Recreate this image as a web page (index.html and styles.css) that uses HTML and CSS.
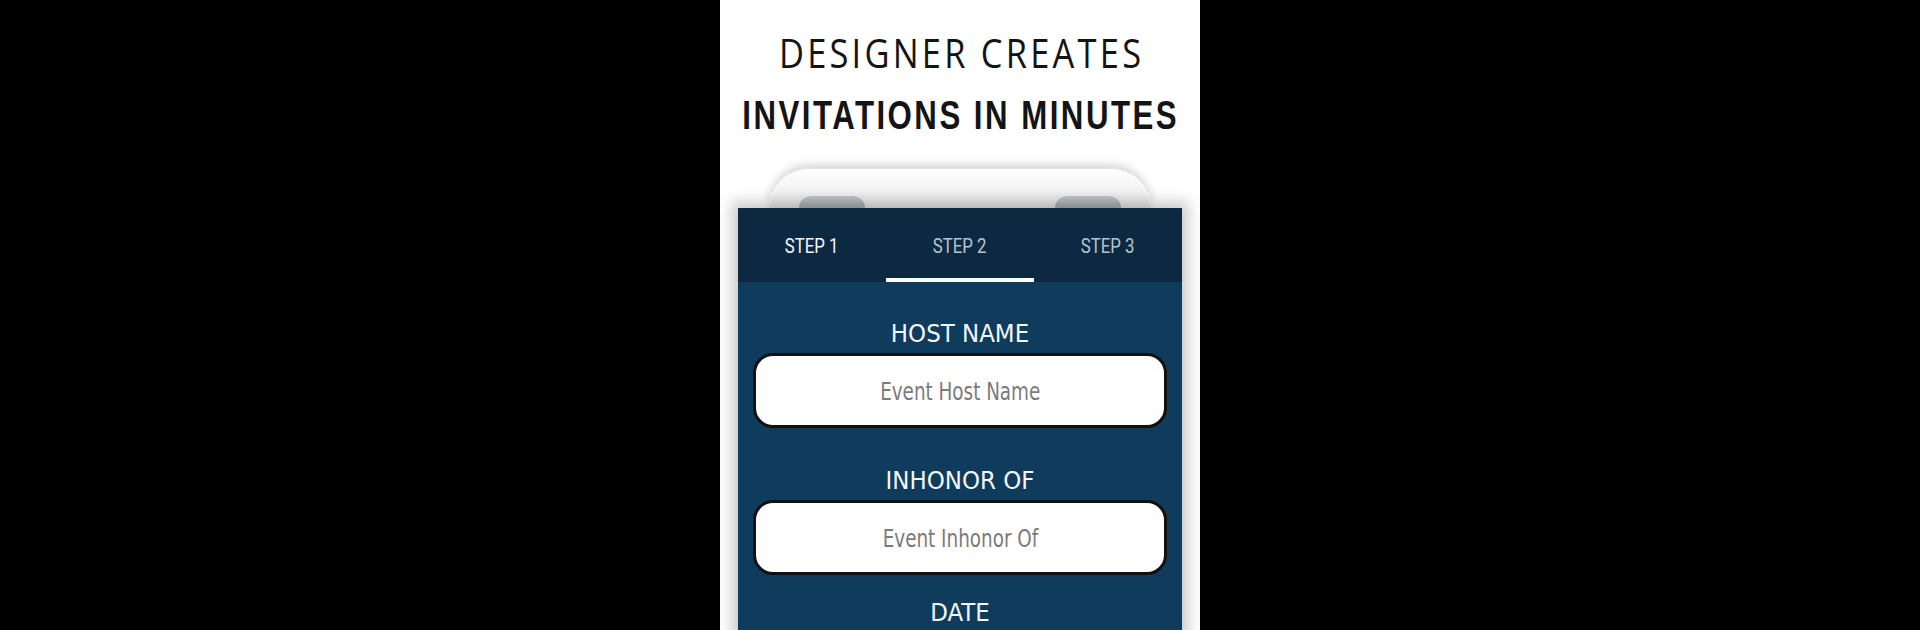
FILE: index.html
```html
<!DOCTYPE html>
<html lang="en">
<head>
<meta charset="utf-8">
<title>Invitation Maker</title>
<link rel="stylesheet" href="styles.css">
</head>
<body>
<main class="panel">
  <header class="title">
    <h1 class="title-light"><span>DESIGNER CREATES</span></h1>
    <h2 class="title-bold"><span>INVITATIONS IN MINUTES</span></h2>
  </header>
  <section class="device">
    <div class="phone-top">
      <span class="bump"></span>
      <span class="bump"></span>
    </div>
    <div class="card">
      <nav class="tabs">
        <div class="tab tab-done"><span>STEP 1</span></div>
        <div class="tab tab-active"><span>STEP 2</span></div>
        <div class="tab"><span>STEP 3</span></div>
      </nav>
      <div class="form">
        <div class="field field-first">
          <div class="label">HOST NAME</div>
          <div class="input"><span class="placeholder">Event Host Name</span></div>
        </div>
        <div class="field field-second">
          <div class="label">INHONOR OF</div>
          <div class="input"><span class="placeholder">Event Inhonor Of</span></div>
        </div>
        <div class="field">
          <div class="label">DATE</div>
        </div>
      </div>
    </div>
  </section>
</main>
</body>
</html>
```
FILE: styles.css
```css
html, body {
  margin: 0;
  padding: 0;
  background: #000;
  height: 630px;
  overflow: hidden;
}

.panel {
  width: 480px;
  height: 630px;
  margin: 0 auto;
  background: #fff;
  overflow: hidden;
  display: flex;
  flex-direction: column;
}

.title {
  padding-top: 28px;
  color: #141414;
}

.title-light,
.title-bold {
  display: flex;
  justify-content: center;
  white-space: nowrap;
}

.title-light span,
.title-bold span {
  display: block;
  flex-shrink: 0;
}

.title-light {
  margin: 0;
  font-family: "Open Sans", "DejaVu Sans", sans-serif;
  font-weight: 400;
  font-size: 40.5px;
  line-height: 50px;
  letter-spacing: 3.8px;
}

.title-light span {
  transform: scaleX(0.85);
  padding-left: 4px;
}

.title-bold {
  margin: 12px 0 0;
  font-family: "Liberation Sans", Arial, sans-serif;
  font-weight: 700;
  font-size: 40px;
  line-height: 50px;
  letter-spacing: 3.2px;
}

.title-bold span {
  transform: scaleX(0.78);
  padding-left: 3px;
}

.device {
  margin-top: 28px;
  display: flex;
  flex-direction: column;
  align-items: center;
}

.phone-top {
  width: 382px;
  height: 40px;
  box-sizing: border-box;
  border-radius: 52px 52px 0 0;
  background: linear-gradient(#ffffff, #f3f3f3 55%, #e4e4e4);
  border-top: 1px solid #e0e0e0;
  box-shadow: 0 -3px 10px rgba(0, 0, 0, 0.18), inset 0 2px 3px rgba(255,255,255,0.9);
  display: flex;
  align-items: flex-end;
  justify-content: space-between;
  padding: 0 30px 0 30px;
}

.bump {
  width: 66px;
  height: 12px;
  border-radius: 22px 22px 0 0;
  background: linear-gradient(#c2c6c6, #a6abab);
}

.card {
  width: 444px;
  flex: 1;
  min-height: 400px;
  background: #0f3b5c;
  box-shadow: 0 0 14px 6px rgba(0, 0, 0, 0.22);
}

.tabs {
  height: 74px;
  background: #0d2942;
  display: grid;
  grid-template-columns: repeat(3, 1fr);
}

.tab {
  display: flex;
  align-items: center;
  justify-content: center;
  box-sizing: border-box;
  font-family: Roboto, "Liberation Sans", sans-serif;
  font-size: 21px;
  color: #b9c3cd;
}

.tab span {
  display: inline-block;
  transform: scaleX(0.8);
  padding-top: 1px;
}

.tab-done {
  color: #f4f6f8;
}

.tab-active {
  border-bottom: 4px solid #ffffff;
  padding-top: 4px;
}

.form {
  padding: 36px 15px 0;
  display: flex;
  flex-direction: column;
}

.field {
  display: flex;
  flex-direction: column;
  align-items: center;
}

.field-first {
  margin-bottom: 37px;
}

.field-second {
  margin-bottom: 22px;
}

.label {
  font-family: "DejaVu Sans Condensed", "DejaVu Sans", sans-serif;
  font-stretch: condensed;
  font-size: 25.5px;
  line-height: 30px;
  color: #f4f7fa;
  margin-bottom: 5px;
}

.input {
  width: 414px;
  height: 75px;
  box-sizing: border-box;
  border: 3px solid #111;
  border-radius: 20px;
  background: #fff;
  display: flex;
  align-items: center;
  justify-content: center;
}

.placeholder {
  display: inline-block;
  font-family: "DejaVu Sans Condensed", "DejaVu Sans", sans-serif;
  font-stretch: condensed;
  font-size: 24px;
  color: #7b7b7b;
  transform: scaleX(0.85);
  white-space: nowrap;
  padding-top: 2px;
}
```
